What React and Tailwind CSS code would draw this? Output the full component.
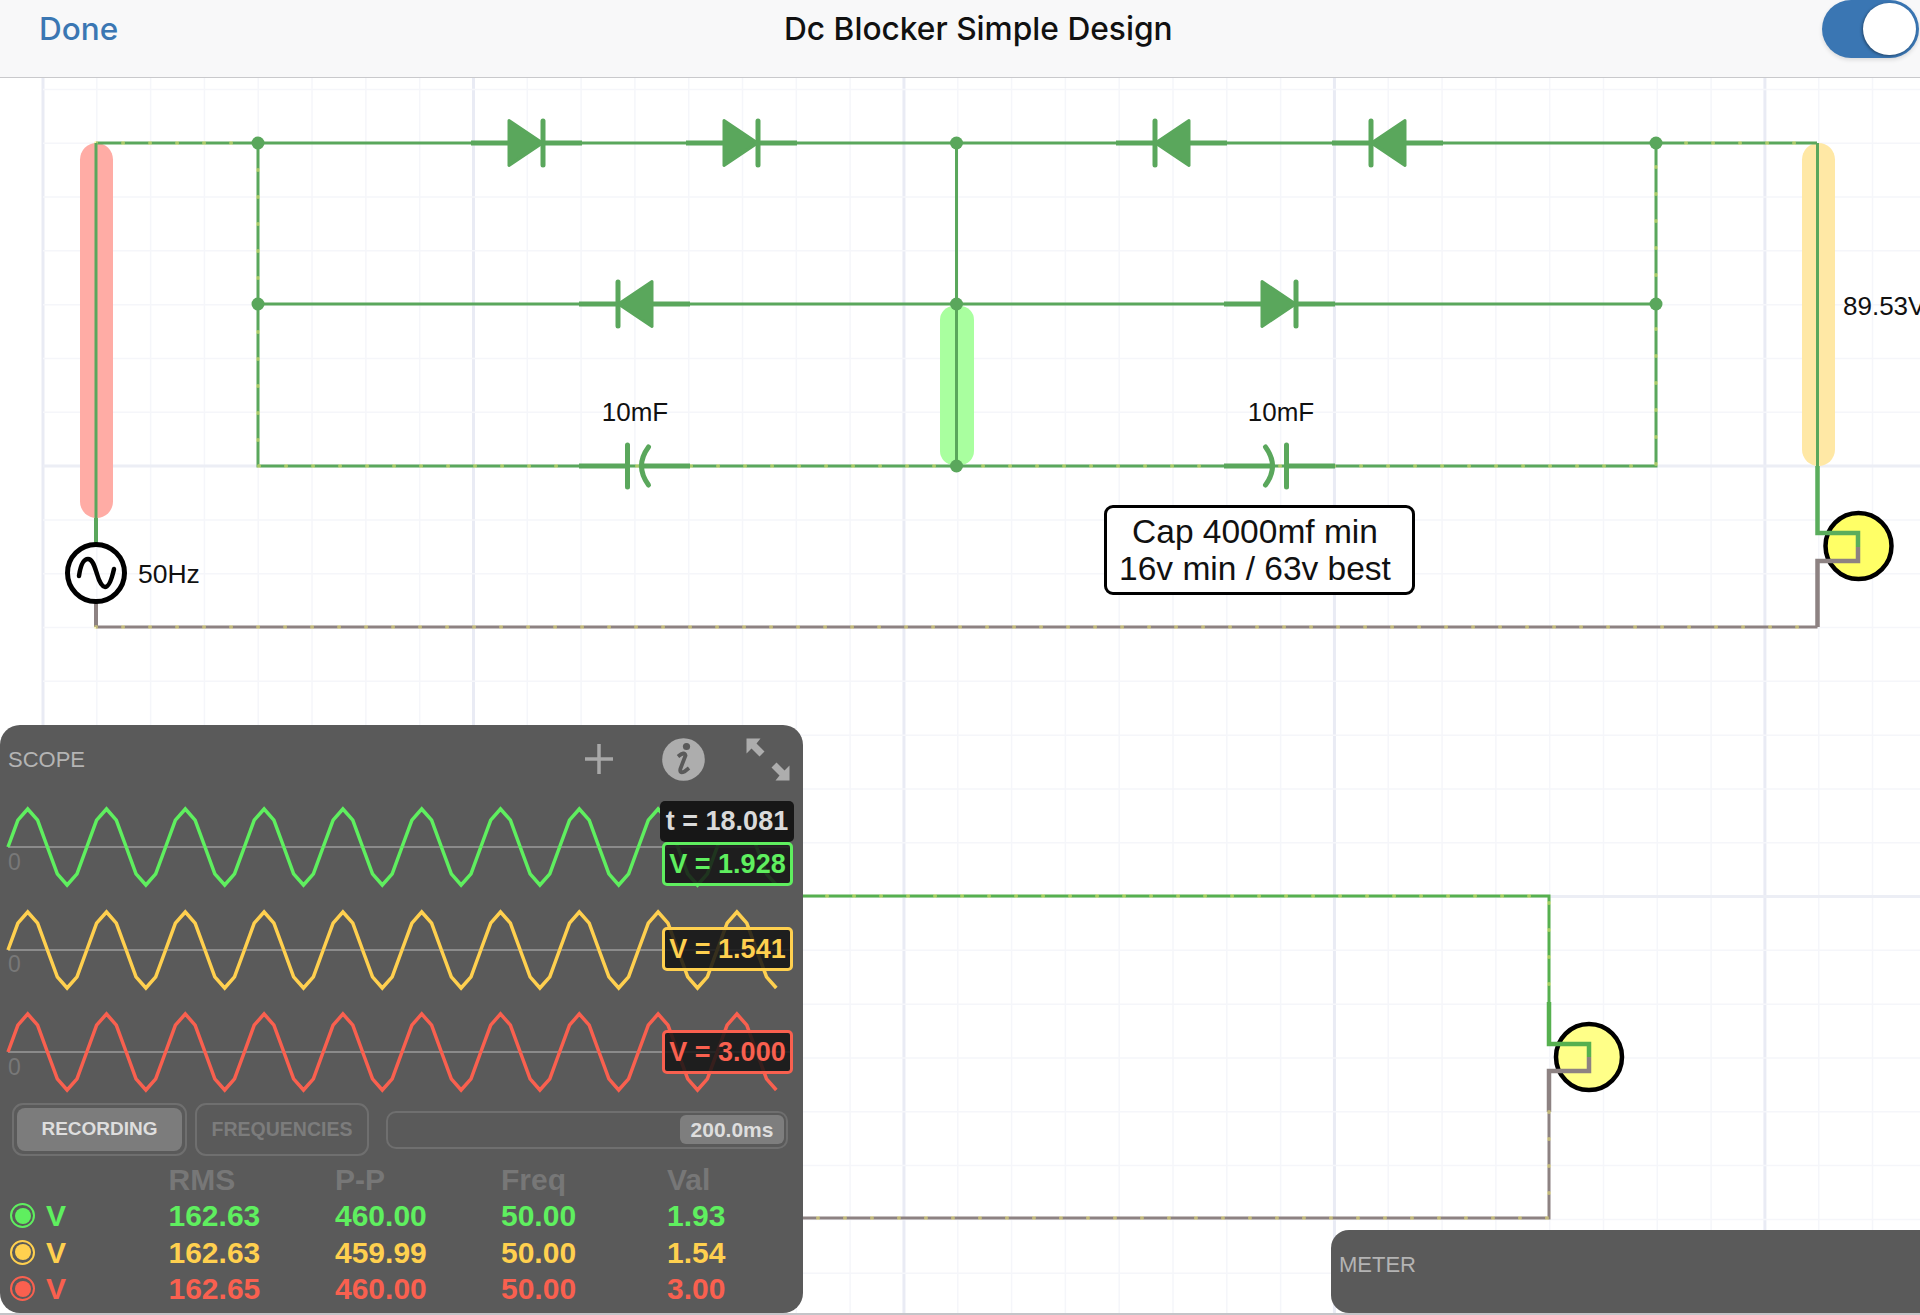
const GREEN = "#5aa75c";
const GRAY = "#8d8282";
const DOT = "#f5ee78";

const vMinor = Array.from({ length: 36 }, (_, i) => 43 + i * 53.81);
const hMinor = Array.from({ length: 25 }, (_, i) => 35.6 + i * 53.81);

function Grid() {
  return (
    <g>
      {vMinor.map((x, i) => (
        <line key={"v" + i} x1={x} x2={x} y1="0" y2="1315" stroke={i % 8 === 0 ? "#e9ebf4" : "#f5f6fa"} strokeWidth={i % 8 === 0 ? 3 : 1.5} />
      ))}
      {hMinor.map((y, i) => (
        <line key={"h" + i} y1={y} y2={y} x1="43" x2="1920" stroke={i % 8 === 0 ? "#eceef5" : "#f5f6fa"} strokeWidth={i % 8 === 0 ? 3 : 1.5} />
      ))}
    </g>
  );
}

function Wire({ d, color = GREEN, width = 3, dots = true }) {
  return (
    <g fill="none">
      <path d={d} stroke={color} strokeWidth={width} />
      {dots && <path d={d} stroke={DOT} strokeWidth="4" strokeLinecap="round" strokeDasharray="0.1 26.9" opacity="0.5" />}
    </g>
  );
}

function Diode({ x, y, flip = false }) {
  const s = flip ? -1 : 1;
  const cx = x + 55.5;
  return (
    <g transform={`translate(${cx} ${y}) scale(${s} 1)`} fill={GREEN} stroke={GREEN}>
      <line x1="-55.5" x2="55.5" y1="0" y2="0" strokeWidth="5" />
      <path d="M-17.5 -22.5 L16 0 L-17.5 22.5 Z" strokeWidth="3" strokeLinejoin="round" />
      <line x1="16.5" x2="16.5" y1="-22" y2="22" strokeWidth="5" strokeLinecap="round" />
    </g>
  );
}

function Capacitor({ x, y, flip = false }) {
  const s = flip ? -1 : 1;
  const cx = x + 55.5;
  return (
    <g transform={`translate(${cx} ${y}) scale(${s} 1)`} fill="none" stroke={GREEN}>
      <line x1="-55.5" x2="-7" y1="0" y2="0" strokeWidth="5" />
      <line x1="5" x2="55.5" y1="0" y2="0" strokeWidth="5" />
      <line x1="-7" x2="-7" y1="-21" y2="21" strokeWidth="5" strokeLinecap="round" />
      <path d="M14 -19 Q0 0 14 19" strokeWidth="5" strokeLinecap="round" />
    </g>
  );
}

function Circuit() {
  return (
    <svg className="absolute inset-0" width="1920" height="1315" viewBox="0 0 1920 1315">
      <Grid />
      <rect x="80" y="143" width="33" height="375" rx="16.5" fill="#ffaca5" />
      <rect x="940" y="306" width="34" height="159" rx="14" fill="#a9ff9f" />
      <rect x="1802" y="143" width="33" height="323" rx="16.5" fill="#ffe8a5" />

      <Wire d="M96 143 H258" />
      <Wire d="M258 143 V466 H956" />
      <Wire d="M956 466 H1656 V143 H1817" />
      <Wire d="M258 143 H1656" dots={false} />
      <Wire d="M258 304 H1656" dots={false} />
      <Wire d="M956.5 143 V466" dots={false} />
      <Wire d="M1817.5 143 V466" dots={false} />
      <Wire d="M96 143 V545" dots={false} />
      <path d="M96 518 V545" fill="none" stroke="#5aa75c" strokeWidth="4" />
      <path d="M96 602 V627" fill="none" stroke={GRAY} strokeWidth="4" />
      <Wire d="M96 627 H1817.5" color={GRAY} />

      {[[258, 143], [956.5, 143], [1656, 143], [258, 304], [956.5, 304], [1656, 304], [956.5, 466]].map(([x, y]) => (
        <circle key={x + "-" + y} cx={x} cy={y} r="6.5" fill={GREEN} />
      ))}

      <Diode x={471} y={143} />
      <Diode x={686} y={143} />
      <Diode x={1116} y={143} flip />
      <Diode x={1332} y={143} flip />
      <Diode x={579} y={304} flip />
      <Diode x={1224} y={304} />
      <Capacitor x={579} y={466} />
      <Capacitor x={1224} y={466} flip />

      <circle cx="96" cy="573" r="28.5" fill="none" stroke="#000" strokeWidth="5" />
      <path d="M79 576 C81 562 85 559 88 559 C93 559 95 568 97 574 C99 581 102 587 105 587 C109 587 112 578 114 569" fill="none" stroke="#000" strokeWidth="4.5" strokeLinecap="round" />

      <circle cx="1858.5" cy="546" r="33" fill="#ffff66" stroke="#000" strokeWidth="4.5" />
      <path d="M1817.5 466 V533 H1858 V547" fill="none" stroke="#5aad5c" strokeWidth="4.5" />
      <path d="M1858 547 V561 H1817.5 V627" fill="none" stroke={GRAY} strokeWidth="4.5" />

      <Wire d="M800 896 H1549 V1002" color="#56b04f" />
      <circle cx="1589" cy="1057" r="33" fill="#ffff88" stroke="#000" strokeWidth="4.5" />
      <path d="M1549 1002 V1044 H1589 V1057" fill="none" stroke="#56b04f" strokeWidth="4.5" />
      <path d="M1589 1057 V1071 H1549 V1112" fill="none" stroke={GRAY} strokeWidth="4.5" />
      <Wire d="M1549 1112 V1218 H800" color={GRAY} />
    </svg>
  );
}

function wavePoints(cy) {
  const pts = [];
  for (let x = 8; x <= 786; x += 9.85) {
    const y = cy - 38 * Math.sin((2 * Math.PI * (x - 8)) / 78.8);
    pts.push(x.toFixed(1) + "," + y.toFixed(1));
  }
  return pts.join(" ");
}

const TRACES = [
  { cy: 54, color: "#5fef5f" },
  { cy: 157, color: "#ffd04f" },
  { cy: 259, color: "#f9604f" },
];

function ReadoutBox({ className, children }) {
  return (
    <div className={"absolute left-[662px] w-[131px] h-[44px] rounded-[5px] border-[3px] bg-[#141414]/85 flex items-center justify-center text-[27px] font-bold " + className}>
      {children}
    </div>
  );
}

function Chart() {
  return (
    <div className="relative h-[306px]">
      <svg className="absolute inset-0" width="803" height="306" viewBox="0 0 803 306">
        {TRACES.map((t) => (
          <g key={t.cy} fill="none">
            <line x1="8" x2="790" y1={t.cy} y2={t.cy} stroke="#8b8b8b" strokeWidth="2" />
            <polyline points={wavePoints(t.cy)} stroke={t.color} strokeWidth="3.5" strokeLinejoin="miter" />
          </g>
        ))}
      </svg>
      <span className="absolute left-[8px] top-[56px] text-[23px] leading-[26px] text-[#787878]">0</span>
      <span className="absolute left-[8px] top-[158px] text-[23px] leading-[26px] text-[#787878]">0</span>
      <span className="absolute left-[8px] top-[261px] text-[23px] leading-[26px] text-[#787878]">0</span>
      <div className="absolute left-[660px] top-[8px] w-[134px] h-[41px] rounded-[5px] bg-[#171717] flex items-center justify-center text-[27px] font-bold text-[#dadada]">t = 18.081</div>
      <ReadoutBox className="top-[49px] border-[#5fef5f] text-[#5fef5f]">V = 1.928</ReadoutBox>
      <ReadoutBox className="top-[134px] border-[#ffd04f] text-[#ffd04f]">V = 1.541</ReadoutBox>
      <ReadoutBox className="top-[237px] border-[#f9604f] text-[#f9604f]">V = 3.000</ReadoutBox>
    </div>
  );
}

function ScopeHeader() {
  return (
    <div className="h-[68px] flex items-center pl-[8px]">
      <span className="text-[22px] text-[#b4b4b4]">SCOPE</span>
      <svg className="ml-auto" width="30" height="30" viewBox="585 744 30 30">
        <path d="M600 744 V774 M586 759 H614" stroke="#a8a8a8" strokeWidth="3.5" fill="none" />
      </svg>
      <svg className="ml-[48px]" width="43" height="43" viewBox="662.5 737.5 43 43">
        <circle cx="684" cy="759" r="21.3" fill="#adadad" />
        <circle cx="687" cy="746" r="3.6" fill="#5a5a5a" />
        <path d="M678.5 756 Q685 750.5 686 755 L681 768 Q679.5 773.5 685 771 L689.5 767.5" fill="none" stroke="#5a5a5a" strokeWidth="3.8" />
      </svg>
      <svg className="ml-[41px] mr-[13px]" width="44" height="43" viewBox="746.5 737.5 44 43">
        <path d="M747 738 H761 L757 743 L765 751 L760 756 L752 748 L747 753 Z" fill="#adadad" />
        <path d="M790 780 H776 L780 775 L772 767 L777 762 L785 770 L790 765 Z" fill="#adadad" />
      </svg>
    </div>
  );
}

function Controls() {
  return (
    <div className="mt-[4px] h-[53px] pl-[12px] flex items-center">
      <div className="w-[175px] h-[53px] rounded-[11px] border-2 border-[#6f6f6f] p-[3px]">
        <div className="h-full rounded-[8px] bg-[#7c7c7c] flex items-center justify-center text-[19px] font-bold text-[#dedede]">RECORDING</div>
      </div>
      <div className="ml-[8px] w-[174px] h-[53px] rounded-[11px] border-2 border-[#6f6f6f] flex items-center justify-center text-[19.5px] font-bold text-[#7c7c7c]">FREQUENCIES</div>
      <div className="ml-[17px] w-[402px] h-[38px] rounded-[10px] border-2 border-[#6f6f6f] flex items-center justify-end pr-[2px]">
        <div className="w-[104px] h-[29px] rounded-[6px] bg-[#7e7e7e] flex items-center justify-center text-[21px] font-bold text-[#dedede]">200.0ms</div>
      </div>
    </div>
  );
}

const ROWS = [
  { color: "#5fef5f", v: ["162.63", "460.00", "50.00", "1.93"] },
  { color: "#ffd04f", v: ["162.63", "459.99", "50.00", "1.54"] },
  { color: "#f9604f", v: ["162.65", "460.00", "50.00", "3.00"] },
];

function Table() {
  return (
    <div className="mt-[5px] grid grid-cols-[168.5px_166.5px_166px_166px_1fr] auto-rows-[36.5px] items-center text-[30px] font-bold">
      <span />
      {["RMS", "P-P", "Freq", "Val"].map((h) => (
        <span key={h} className="text-[#777777]">{h}</span>
      ))}
      {ROWS.map((r, i) => (
        <div key={i} className="contents" style={{ color: r.color }}>
          <div className="flex items-center pl-[10px]">
            <span className="w-[25px] h-[25px] rounded-full border-2 flex items-center justify-center" style={{ borderColor: r.color }}>
              <span className="w-[16px] h-[16px] rounded-full" style={{ backgroundColor: r.color }} />
            </span>
            <span className="ml-[11px]">V</span>
          </div>
          {r.v.map((val, j) => (
            <span key={j}>{val}</span>
          ))}
        </div>
      ))}
    </div>
  );
}

export default function App() {
  return (
    <div className="relative w-[1920px] h-[1315px] overflow-hidden bg-white font-['Liberation_Sans',sans-serif]">
      <Circuit />

      <header className="relative h-[78px] bg-[#f8f8f9] border-b border-[#c9c9cc] flex items-start font-['Inter',sans-serif]">
        <span className="w-[784px] pl-[39px] text-[31.5px] leading-[58px] font-medium text-[#3b77b3]">Done</span>
        <span className="text-[31.7px] leading-[58px] font-medium text-[#111]">Dc Blocker Simple Design</span>
        <div className="ml-auto mr-[1px] relative w-[97px] h-[58px] rounded-full bg-[#3a76b3] shadow-[0_2px_4px_rgba(0,0,0,0.12)] flex items-center justify-end pr-[3px]">
          <div className="w-[53px] h-[52px] rounded-full bg-white shadow-[-1px_1px_3px_rgba(0,0,0,0.4)]" />
        </div>
      </header>

      <span className="absolute left-[601px] top-[397px] w-[68px] text-center text-[26px] leading-[30px] text-[#111] whitespace-nowrap">10mF</span>
      <span className="absolute left-[1247px] top-[397px] w-[68px] text-center text-[26px] leading-[30px] text-[#111] whitespace-nowrap">10mF</span>
      <span className="absolute left-[138px] top-[559px] text-[26.5px] leading-[30px] text-[#111]">50Hz</span>
      <span className="absolute left-[1843px] top-[291px] text-[26px] leading-[30px] text-[#111] whitespace-nowrap">89.53V</span>

      <div className="absolute left-[1104px] top-[505px] w-[311px] h-[90px] rounded-[9px] border-[3px] border-black bg-white flex flex-col items-center justify-center text-[33.5px] leading-[37px] text-[#111]">
        <span className="-ml-[9px]">Cap 4000mf min</span>
        <span className="-ml-[9px]">16v min / 63v best</span>
      </div>

      <section className="absolute left-0 top-[725px] w-[803px] h-[588px] rounded-[20px] bg-[#5a5a5a] flex flex-col overflow-hidden">
        <ScopeHeader />
        <Chart />
        <Controls />
        <Table />
      </section>

      <section className="absolute left-[1331px] right-0 top-[1230px] h-[83px] rounded-l-[18px] bg-[#5a5a5a] pl-[8px] pt-[21px]">
        <span className="text-[22px] leading-[28px] text-[#b4b4b4]">METER</span>
      </section>

      <div className="absolute left-0 right-0 bottom-0 h-[2px] bg-[#c4c4c8]" />
    </div>
  );
}
